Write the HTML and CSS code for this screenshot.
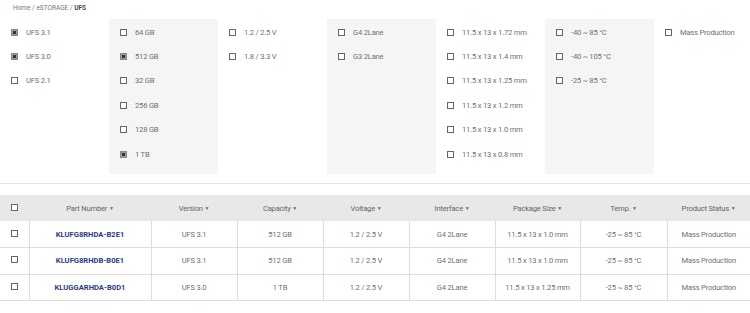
FILE: index.html
```html
<!DOCTYPE html>
<html lang="en">
<head>
  <meta charset="UTF-8">
  <title>eSTORAGE | UFS</title>
  <link rel="stylesheet" href="styles.css">
</head>
<body>

<nav class="breadcrumb">Home / eSTORAGE / <strong>UFS</strong></nav>

<div class="filters">
  <div class="filter-col">
    <label class="opt"><span class="box checked"></span>UFS 3.1</label>
    <label class="opt"><span class="box checked"></span>UFS 3.0</label>
    <label class="opt"><span class="box"></span>UFS 2.1</label>
  </div>
  <div class="filter-col shaded">
    <label class="opt"><span class="box"></span>64 GB</label>
    <label class="opt"><span class="box checked"></span>512 GB</label>
    <label class="opt"><span class="box"></span>32 GB</label>
    <label class="opt"><span class="box"></span>256 GB</label>
    <label class="opt"><span class="box"></span>128 GB</label>
    <label class="opt"><span class="box checked"></span>1 TB</label>
  </div>
  <div class="filter-col">
    <label class="opt"><span class="box"></span>1.2 / 2.5 V</label>
    <label class="opt"><span class="box"></span>1.8 / 3.3 V</label>
  </div>
  <div class="filter-col shaded">
    <label class="opt"><span class="box"></span>G4 2Lane</label>
    <label class="opt"><span class="box"></span>G3 2Lane</label>
  </div>
  <div class="filter-col">
    <label class="opt"><span class="box"></span>11.5 x 13 x 1.72 mm</label>
    <label class="opt"><span class="box"></span>11.5 x 13 x 1.4 mm</label>
    <label class="opt"><span class="box"></span>11.5 x 13 x 1.25 mm</label>
    <label class="opt"><span class="box"></span>11.5 x 13 x 1.2 mm</label>
    <label class="opt"><span class="box"></span>11.5 x 13 x 1.0 mm</label>
    <label class="opt"><span class="box"></span>11.5 x 13 x 0.8 mm</label>
  </div>
  <div class="filter-col shaded">
    <label class="opt"><span class="box"></span>-40 ~ 85 °C</label>
    <label class="opt"><span class="box"></span>-40 ~ 105 °C</label>
    <label class="opt"><span class="box"></span>-25 ~ 85 °C</label>
  </div>
  <div class="filter-col">
    <label class="opt"><span class="box"></span>Mass Production</label>
  </div>
</div>

<table class="results">
  <colgroup>
    <col style="width:29px">
    <col style="width:122px">
    <col style="width:86px">
    <col style="width:86px">
    <col style="width:86px">
    <col style="width:86px">
    <col style="width:85px">
    <col style="width:87px">
    <col style="width:83px">
  </colgroup>
  <thead>
    <tr>
      <th><span class="box"></span></th>
      <th>Part Number <span class="caret">▼</span></th>
      <th>Version <span class="caret">▼</span></th>
      <th>Capacity <span class="caret">▼</span></th>
      <th>Voltage <span class="caret">▼</span></th>
      <th>Interface <span class="caret">▼</span></th>
      <th>Package Size <span class="caret">▼</span></th>
      <th>Temp. <span class="caret">▼</span></th>
      <th>Product Status <span class="caret">▼</span></th>
    </tr>
  </thead>
  <tbody>
    <tr>
      <td><span class="box"></span></td>
      <td class="part">KLUFG8RHDA-B2E1</td>
      <td>UFS 3.1</td>
      <td>512 GB</td>
      <td>1.2 / 2.5 V</td>
      <td>G4 2Lane</td>
      <td>11.5 x 13 x 1.0 mm</td>
      <td>-25 ~ 85 °C</td>
      <td>Mass Production</td>
    </tr>
    <tr>
      <td><span class="box"></span></td>
      <td class="part">KLUFG8RHDB-B0E1</td>
      <td>UFS 3.1</td>
      <td>512 GB</td>
      <td>1.2 / 2.5 V</td>
      <td>G4 2Lane</td>
      <td>11.5 x 13 x 1.0 mm</td>
      <td>-25 ~ 85 °C</td>
      <td>Mass Production</td>
    </tr>
    <tr>
      <td><span class="box"></span></td>
      <td class="part">KLUGGARHDA-B0D1</td>
      <td>UFS 3.0</td>
      <td>1 TB</td>
      <td>1.2 / 2.5 V</td>
      <td>G4 2Lane</td>
      <td>11.5 x 13 x 1.25 mm</td>
      <td>-25 ~ 85 °C</td>
      <td>Mass Production</td>
    </tr>
  </tbody>
</table>

</body>
</html>
```

FILE: styles.css
```css
* {
  box-sizing: border-box;
}

body {
  margin: 0;
  font-family: 'Roboto', 'Liberation Sans', sans-serif;
  font-size: 7.6px;
  letter-spacing: -0.2px;
  color: #707070;
  background: #fff;
}

.breadcrumb {
  height: 19px;
  padding: 4px 0 0 13px;
  font-size: 6.5px;
  letter-spacing: 0;
  color: #777;
}

.breadcrumb strong {
  color: #444;
}

.filters {
  display: grid;
  grid-template-columns: repeat(6, 109px) 1fr;
  border-bottom: 1px solid #e3e3e3;
  padding-bottom: 9px;
}

.filter-col {
  display: flex;
  flex-direction: column;
  padding: 1px 0 7px 11px;
  min-height: 155px;
}

.filter-col.shaded {
  background: #f5f5f5;
}

.opt {
  display: flex;
  align-items: center;
  gap: 8px;
  height: 24.4px;
  white-space: nowrap;
}

.box {
  display: inline-block;
  width: 7px;
  height: 7px;
  border: 1px solid #666;
  background: #fff;
  flex: none;
}

.box.checked {
  background: #333;
  border-color: #888;
  box-shadow: inset 0 0 0 1px #999;
}

.results {
  width: 750px;
  margin-top: 11px;
  border-collapse: collapse;
  table-layout: fixed;
  text-align: center;
}

.results th {
  height: 26px;
  background: #e8e8e8;
  font-weight: normal;
  color: #666;
  padding: 0;
}

.results td {
  height: 26.5px;
  padding: 0;
  border-bottom: 1px solid #ddd;
  border-left: 1px solid #ddd;
}

.results td:first-child {
  border-left: none;
}

.results .part {
  color: #2b3a8c;
  font-weight: bold;
  letter-spacing: 0;
}

.caret {
  font-size: 5px;
  vertical-align: 1px;
}
```
